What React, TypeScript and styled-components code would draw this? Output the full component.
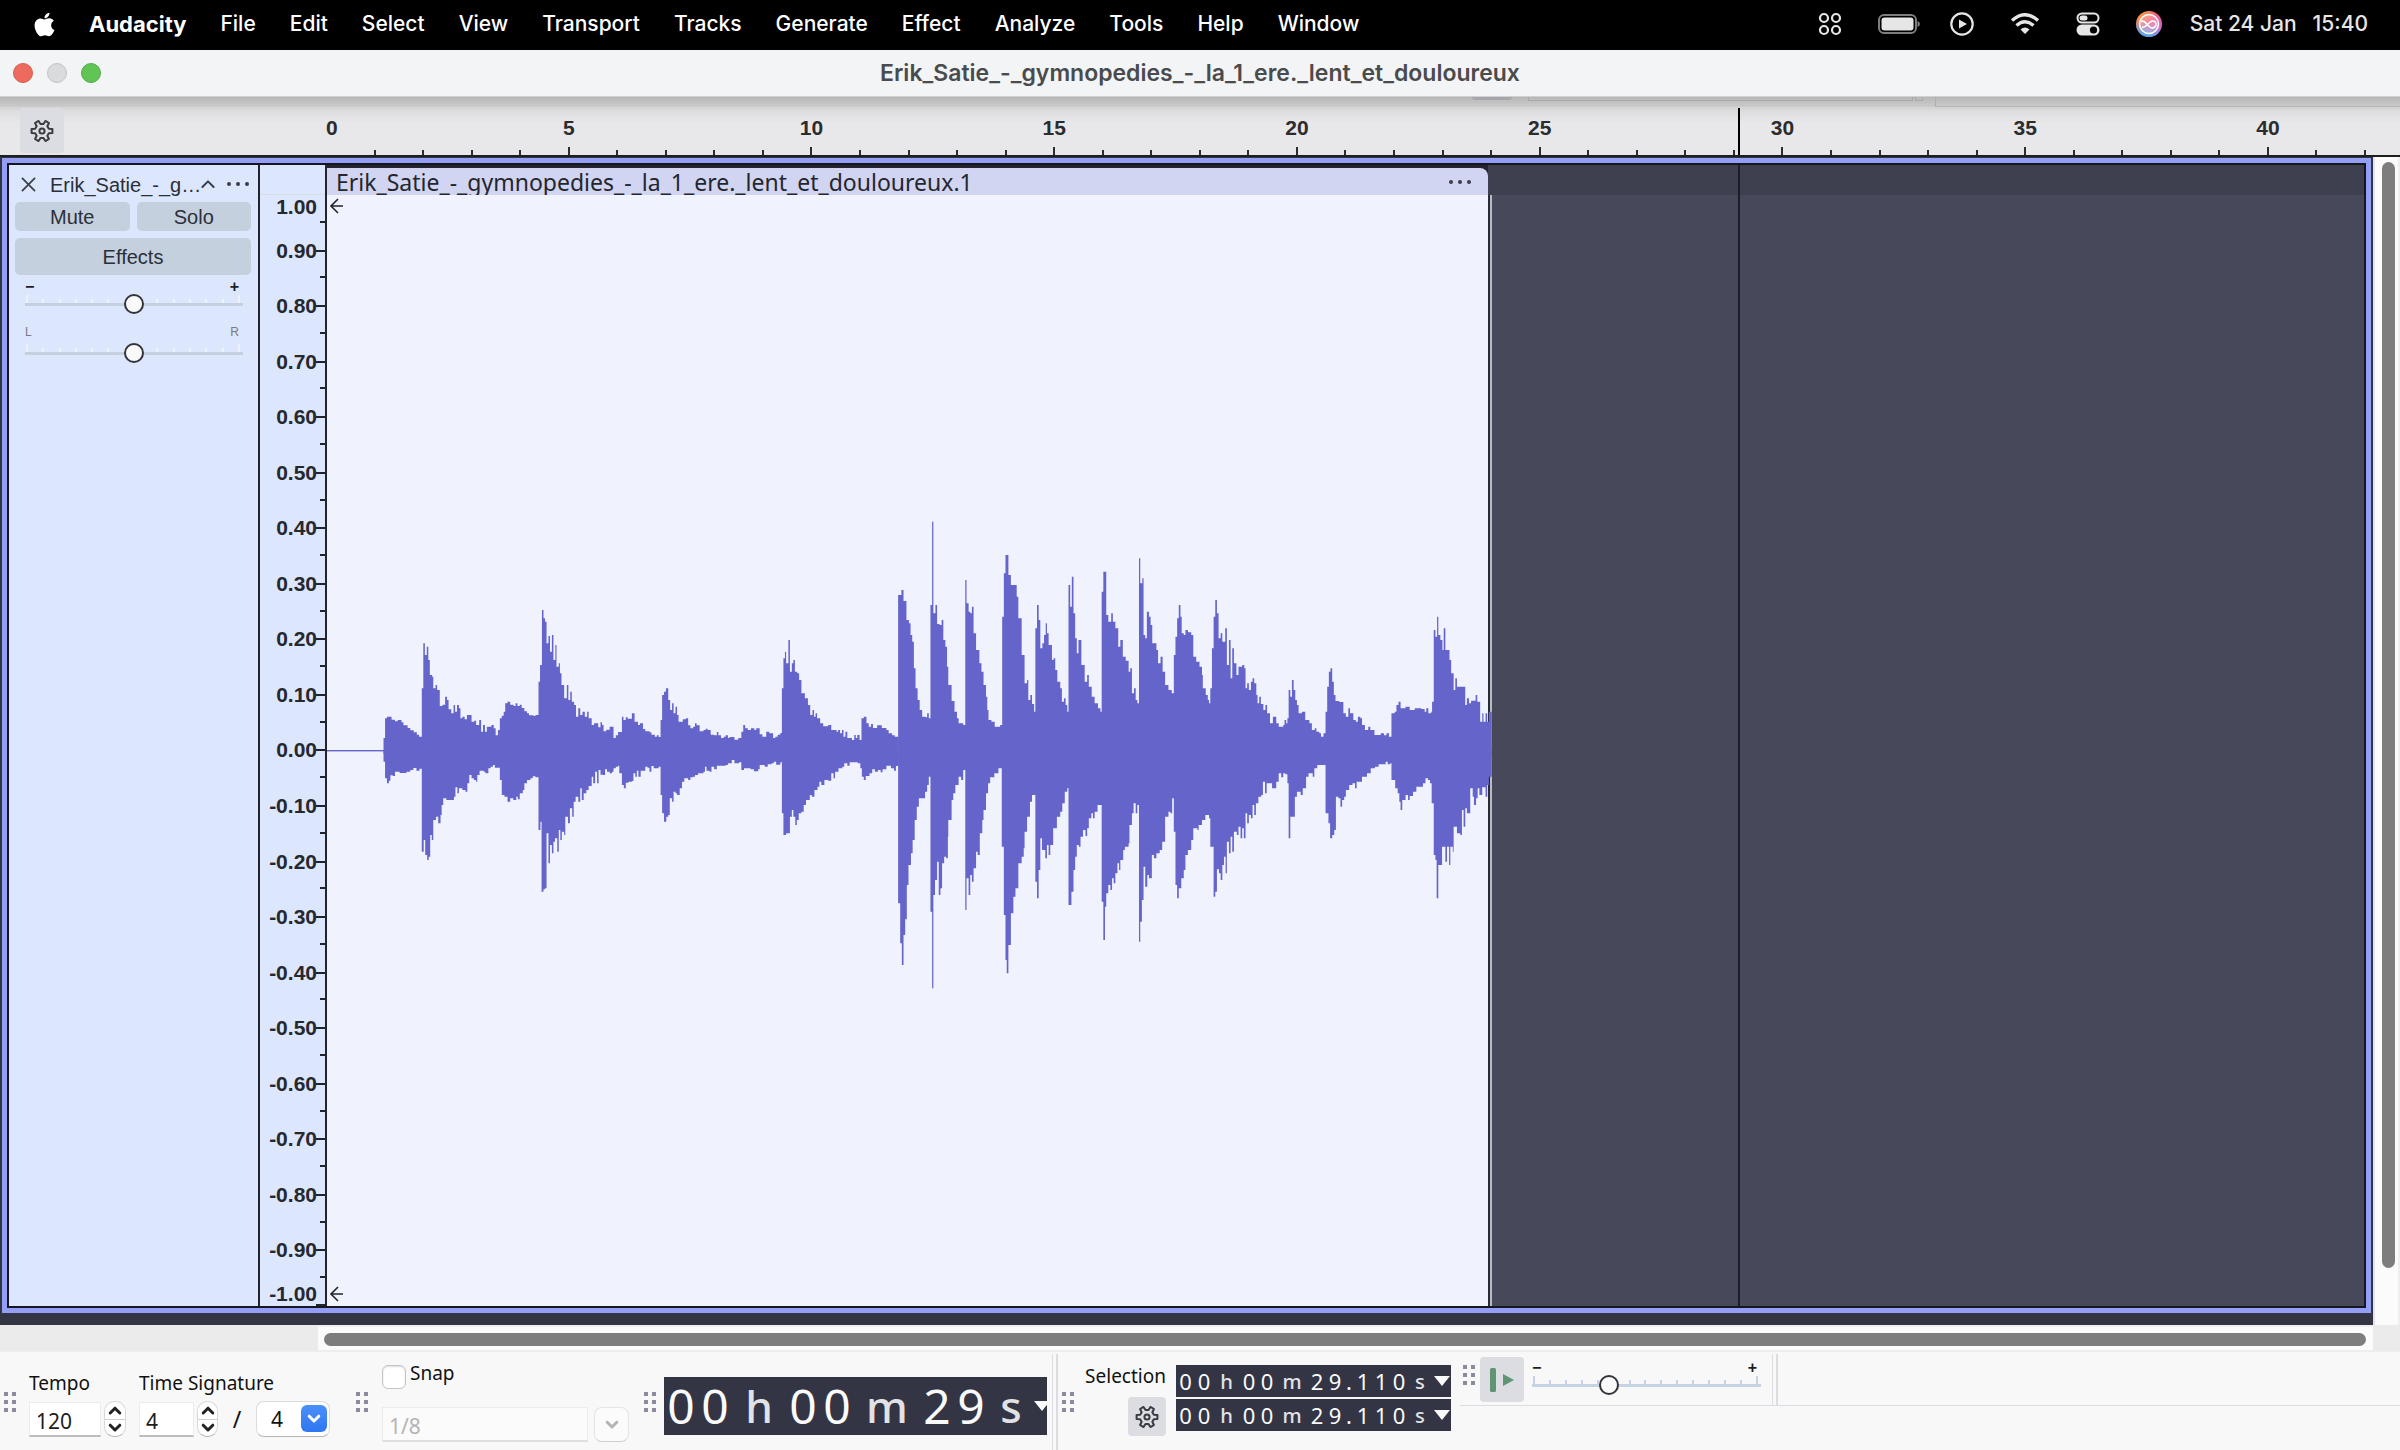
import React from "react";
import styled, { createGlobalStyle, css } from "styled-components";
import { FaApple } from "react-icons/fa6";

const HELV = `"Liberation Sans", Arial, sans-serif`;
const LUCIDA = `"Noto Sans", "Open Sans", sans-serif`;
const SYSTEM = `Inter, "Liberation Sans", sans-serif`;

const Global = createGlobalStyle`
  *, *::before, *::after { box-sizing: border-box; }
  body { margin: 0; background: #f8f8f8; font-family: ${HELV}; }
  button, input, select { font: inherit; color: inherit; margin: 0; }
`;

const plainButton = css`
  border: 0;
  padding: 0;
  background: none;
  display: flex;
  align-items: center;
  justify-content: center;
`;

const Window = styled.div`
  min-height: 100vh;
  display: flex;
  flex-direction: column;
`;

/* ---------- system menu bar ---------- */
const MenuBar = styled.header`
  height: 50px;
  flex: none;
  background: #000;
  color: #fff;
  display: flex;
  align-items: center;
  justify-content: space-between;
  padding: 0 32px 2px 34px;
  font: 500 21px/24px ${SYSTEM};
`;
const MenuGroup = styled.nav`
  display: flex;
  align-items: center;
  gap: 34px;
`;
const MenuItem = styled.button<{ $bold?: boolean }>`
  ${plainButton}
  font-weight: ${(p) => (p.$bold ? 700 : 500)};
  font-size: ${(p) => (p.$bold ? 22 : 21)}px;
  svg { width: 21px; }
`;
const StatusGroup = styled.div`
  display: flex;
  align-items: center;
  gap: 36px;
  color: #e6e6e6;
`;
const BatteryIcon = styled.svg`
  margin-right: -6px;
`;
const Clock = styled.time`
  display: flex;
  gap: 16px;
  margin-left: -8px;
`;

/* ---------- title bar ---------- */
const TitleBar = styled.div`
  height: 47px;
  flex: none;
  background: #f3f4f6;
  border-bottom: 1px solid #d0d1d2;
  display: grid;
  grid-template-columns: 1fr auto 1fr;
  align-items: center;
  padding: 0 13px;
`;
const Lights = styled.div`
  display: flex;
  gap: 14px;
`;
const Light = styled.button<{ $fill: string; $edge: string }>`
  width: 20px;
  height: 20px;
  padding: 0;
  border-radius: 50%;
  background: ${(p) => p.$fill};
  border: 1px solid ${(p) => p.$edge};
`;
const Title = styled.h1`
  margin: 0;
  font: 600 23px/26px ${SYSTEM};
  color: #4a4b4c;
`;

/* ---------- time ruler ---------- */
const RulerBar = styled.div`
  height: 60px;
  flex: none;
  display: flex;
  flex-direction: column;
  border-bottom: 2px solid #1b201f;
  background: linear-gradient(#b7b7b7 0, #cbcbcb 10px, #dcdcdd 13px, #e8e8ea 26px);
`;
const HiddenBar = styled.div`
  height: 11px;
  flex: none;
  display: flex;
  align-items: flex-start;
  border-bottom: 1px solid #d6d6d6;
`;
const HiddenLeft = styled.div`
  flex: 1475 0 0;
`;
const HiddenKnob = styled.div`
  width: 40px;
  height: 3px;
  background: #a6a7aa;
  border-radius: 0 0 8px 8px;
  margin-right: 16px;
`;
const HiddenBox = styled.div`
  flex: 383 0 0;
  height: 4px;
  border: 1px solid #a9a9a9;
  border-top: 0;
`;
const HiddenTab = styled.div`
  width: 8px;
  height: 4px;
  margin: 0 12px 0 2px;
  border: 1px solid #a9a9a9;
  border-top: 0;
`;
const HiddenRight = styled.div`
  flex: 465 0 0;
  height: 10px;
  border-left: 1px solid #adadad;
  border-bottom: 1px solid #b5b5b5;
`;
const RulerRow = styled.div`
  flex: 1;
  display: flex;
`;
const RulerGutter = styled.div`
  width: 326px;
  flex: none;
  padding-left: 20px;
`;
const SquareButton = styled.button<{ $w: number; $h: number }>`
  ${plainButton}
  width: ${(p) => p.$w}px;
  height: ${(p) => p.$h}px;
  border-radius: 4px;
  background: #dcdde3;
`;
const Seconds = styled.div`
  flex: 1;
  position: relative;
  display: grid;
  grid-template-columns: repeat(42, 1fr);
  grid-template-rows: 1fr 8px;
  margin-right: 35px;
`;
const SecondLabel = styled.span<{ $at: number }>`
  grid-row: 1;
  grid-column: ${(p) => (p.$at === 0 ? "1 / span 2" : `${p.$at - 1} / span 4`)};
  text-align: ${(p) => (p.$at === 0 ? "left" : "center")};
  font: bold 21px/38px ${HELV};
  padding-top: 1px;
  color: #2b2c2e;
`;
const SecondTick = styled.span<{ $major: boolean }>`
  grid-row: 2;
  margin-right: -1px;
  align-self: end;
  height: ${(p) => (p.$major ? 8 : 5)}px;
  border-right: 2px solid #2b2c2e;
`;
const Playhead = styled.div<{ $color: string }>`
  position: absolute;
  top: 0;
  bottom: 0;
  left: 69.25%;
  width: 2px;
  background: ${(p) => p.$color};
`;

/* ---------- track area ---------- */
const TrackArea = styled.main`
  flex: 1;
  display: flex;
`;
const TrackPad = styled.div`
  flex: 1;
  display: flex;
  background: #333545;
  padding: 1px 2px 12px;
`;
const TrackFrame = styled.section`
  flex: 1;
  display: flex;
  border: 5px solid #949ef5;
  background: #15161f;
  padding: 2px;
`;
const Panel = styled.div`
  width: 251px;
  flex: none;
  background: #dce6fc;
  border-right: 2px solid #22242c;
  padding: 6px 7px 0 6px;
  display: flex;
  flex-direction: column;
  color: #2b2f38;
  font-size: 20px;
  line-height: 24px;
`;
const PanelHead = styled.div`
  height: 31px;
  display: flex;
  align-items: center;
  padding: 0 2px 4px 6px;
`;
const IconButton = styled.button`
  ${plainButton}
`;
const TrackName = styled.span`
  flex: 1;
  padding-left: 14px;
  white-space: nowrap;
`;
const HeadTools = styled.div`
  display: flex;
  gap: 12px;
`;
const ButtonRow = styled.div`
  display: flex;
  gap: 7px;
  margin-bottom: 7px;
`;
const PanelButton = styled.button<{ $tall?: boolean }>`
  ${plainButton}
  flex: 1;
  height: ${(p) => (p.$tall ? 37 : 29)}px;
  border-radius: 5px;
  background: #c4d0de;
`;
const SliderBlock = styled.div`
  padding: 0 8px 0 10px;
`;
const SliderEnds = styled.div<{ $small?: boolean }>`
  display: flex;
  justify-content: space-between;
  padding: 0 4px 0 0;
  height: ${(p) => (p.$small ? 17 : 11)}px;
  font: ${(p) => (p.$small ? "12px/14px" : "bold 16px/10px")} ${HELV};
  color: ${(p) => (p.$small ? "#777a80" : "#1d1f26")};
`;
const SliderStack = styled.div`
  display: grid;
  height: 22px;
  margin-bottom: 10px;
`;
const Ticks = styled.div<{ $color: string }>`
  grid-area: 1 / 1;
  height: 11px;
  padding: 0 3px 0 1px;
  display: flex;
  align-items: flex-end;
  justify-content: space-between;
  span { width: 2px; height: 5px; background: ${(p) => p.$color}; }
  span:first-child, span:last-child { height: 9px; }
`;
const Range = styled.input<{ $line: string }>`
  grid-area: 1 / 1;
  appearance: none;
  width: 100%;
  height: 22px;
  background: linear-gradient(${(p) => p.$line}, ${(p) => p.$line}) center / 100% 3px no-repeat;
  &::-webkit-slider-thumb {
    appearance: none;
    width: 20px;
    height: 20px;
    border-radius: 50%;
    border: 2px solid #33353b;
    background: #fafafa;
  }
`;

const LevelRuler = styled.div`
  width: 67px;
  flex: none;
  background: #dce6fc;
  border-right: 2px solid #22242c;
  padding-top: 29px;
  display: flex;
  flex-direction: column;
`;
const tick = "linear-gradient(#22242c, #22242c)";
const Level = styled.div<{ $edge?: "top" | "bottom" }>`
  flex: ${(p) => (p.$edge ? 1 : 2)} 0 0;
  display: flex;
  align-items: ${(p) => (p.$edge === "top" ? "flex-start" : p.$edge === "bottom" ? "flex-end" : "center")};
  justify-content: flex-end;
  padding-right: 8px;
  font: bold 21px/24px ${HELV};
  color: #26282f;
  border-top: ${(p) => (p.$edge === "top" ? "1px solid #d9dce2" : "0")};
  background: ${(p) =>
    p.$edge === "top"
      ? `${tick} right bottom / 5px 2px no-repeat`
      : p.$edge === "bottom"
        ? `${tick} right bottom / 9px 2px no-repeat`
        : `${tick} right center / 9px 2px no-repeat, ${tick} right bottom / 5px 2px no-repeat`};
`;

const Lane = styled.div`
  flex: 1;
  position: relative;
  display: flex;
  background: linear-gradient(#3f404f 30px, #47485a 30px);
`;
const Clip = styled.article`
  width: 57%;
  display: flex;
  flex-direction: column;
  position: relative;
  background: #22232f;
`;
const ClipHead = styled.div`
  height: 27px;
  margin-top: 3px;
  flex: none;
  border-top-right-radius: 8px;
  background: #d1d5f1;
  display: flex;
  align-items: center;
  justify-content: space-between;
  padding: 0 17px 0 9px;
  font: 23px/26px ${LUCIDA};
  color: #24262e;
`;
const Wave = styled.div`
  flex: 1;
  position: relative;
  background: #f0f2fe;
  svg.wave { position: absolute; inset: 0; width: 100%; height: 100%; overflow: visible; }
`;
const EdgeArrow = styled.svg<{ $end?: boolean }>`
  position: absolute;
  left: 2px;
  ${(p) => (p.$end ? "bottom: 4px;" : "top: 3px;")}
`;
const ClipEdge = styled.div`
  width: 4px;
  margin-top: 30px;
  border-left: 2px solid #2a2b36;
  background: #b9bac4;
`;

const VScroll = styled.div`
  width: 27px;
  flex: none;
  background: #fbfbfb;
  border-left: 2px solid #e4e2e4;
  border-right: 2px solid #eeeeee;
  padding: 5px 3px 57px 7px;
  display: flex;
`;
const Thumb = styled.div`
  flex: 1;
  border-radius: 7px;
  background: #7d7d7d;
`;
const HScroll = styled.div`
  height: 26px;
  flex: none;
  background: #ebebeb;
  padding: 0 27px 0 318px;
  display: flex;
`;
const HTrack = styled.div`
  flex: 1;
  display: flex;
  background: #fbfbfb;
  border-top: 2px solid #eeeeee;
  border-bottom: 1px solid #eeeeee;
  padding: 6px 7px 4px 6px;
`;

/* ---------- bottom toolbars ---------- */
const Dock = styled.footer`
  height: 99px;
  flex: none;
  background: #f8f8f8;
  border-top: 1px solid #eeeeee;
  display: flex;
  align-items: stretch;
  font: 19px/24px ${LUCIDA};
  color: #111;
`;
const Toolbar = styled.div<{ $lead: number }>`
  display: flex;
  flex: none;
  padding-left: ${(p) => p.$lead}px;
`;
const GripBox = styled.div<{ $high?: boolean }>`
  flex: none;
  align-self: flex-start;
  margin-top: ${(p) => (p.$high ? 13 : 40)}px;
  display: grid;
  grid-template-columns: 4px 4px;
  gap: 4px;
  i { height: 4px; background: #8a8b9e; }
`;
const Field = styled.div<{ $w: number; $ml: number }>`
  width: ${(p) => p.$w}px;
  margin-left: ${(p) => p.$ml}px;
  padding-top: 19px;
  display: flex;
  flex-direction: column;
  white-space: nowrap;
`;
const Inline = styled.div`
  display: flex;
  align-items: center;
  gap: 3px;
  margin-top: 6px;
`;
const TextBox = styled.input<{ $w: number; $dim?: boolean }>`
  width: ${(p) => p.$w}px;
  height: 35px;
  padding: 4px 6px 0;
  border: 1px solid #ececec;
  border-bottom: 2px solid ${(p) => (p.$dim ? "#dedede" : "#bcbcbc")};
  background: ${(p) => (p.$dim ? "#fbfbfb" : "#fff")};
  color: ${(p) => (p.$dim ? "#b4b4b4" : "#1c1c1c")};
  font: 21px/24px ${LUCIDA};
`;
const Spinner = styled.div`
  width: 22px;
  height: 36px;
  border-radius: 10px;
  background: #fff;
  border: 1px solid #d9d9d9;
  border-bottom-color: #b5b5b5;
  display: flex;
  flex-direction: column;
`;
const SpinHalf = styled.button`
  ${plainButton}
  flex: 1;
  & + & { border-top: 1px solid #d0d0d0; }
`;
const Slash = styled.span`
  width: 33px;
  text-align: center;
  font-size: 23px;
`;
const SelectWrap = styled.div`
  position: relative;
  width: 77px;
  height: 36px;
`;
const Select = styled.select`
  appearance: none;
  width: 100%;
  height: 100%;
  border: 1px solid #dcdcdc;
  border-bottom-color: #b5b5b5;
  border-radius: 8px;
  background: #fff;
  padding: 0 0 0 14px;
  font: 21px/24px ${LUCIDA};
`;
const SelectMark = styled.span`
  position: absolute;
  right: 3px;
  top: 4px;
  width: 26px;
  height: 27px;
  border-radius: 6px;
  background: linear-gradient(#4a90fa, #2f76f1);
  display: flex;
  align-items: center;
  justify-content: center;
  pointer-events: none;
`;
const SnapField = styled.div`
  width: 262px;
  margin-left: 14px;
  display: flex;
  flex-direction: column;
`;
const SnapLabel = styled.label`
  display: flex;
  gap: 4px;
  height: 37px;
  margin: 9px 0;
  align-items: flex-start;
`;
const Tick = styled.input`
  appearance: none;
  width: 24px;
  height: 24px;
  && { margin-top: 4px; }
  border: 1px solid #c4c4c4;
  border-radius: 6px;
  background: #fff;
  box-shadow: inset 0 1px 2px #dddddd;
`;
const SnapRow = styled.div`
  display: flex;
  gap: 6px;
`;
const ComboButton = styled.button`
  ${plainButton}
  width: 35px;
  height: 35px;
  border: 1px solid #e4e4e4;
  border-bottom-color: #d0d0d0;
  border-radius: 8px;
  background: #fbfbfb;
`;
const Clockface = styled.div<{ $big?: boolean }>`
  display: flex;
  align-items: center;
  width: ${(p) => (p.$big ? 383 : 275)}px;
  height: ${(p) => (p.$big ? 58 : 32)}px;
  background: #333545;
  color: #fafafa;
  font: ${(p) => (p.$big ? "48px/58px" : "22px/32px")} ${LUCIDA};
`;
const Cell = styled.span<{ $w: number; $unit?: boolean }>`
  width: ${(p) => p.$w}px;
  flex: none;
  text-align: center;
  font-size: ${(p) => (p.$unit ? "0.92em" : "1em")};
  font-weight: ${(p) => (p.$unit ? 500 : 400)};
  color: ${(p) => (p.$unit ? "#e2e2e6" : "#fafafa")};
`;
const DropArrow = styled.button`
  ${plainButton}
  flex: 1;
`;
const BigClock = styled.div`
  margin: 25px 5px 0 8px;
`;
const Rule = styled.div`
  width: 6px;
  flex: none;
  margin-top: 2px;
  border-left: 1px solid #dcdce2;
  border-right: 2px solid #dcdce2;
`;
const SelectionHead = styled.div`
  width: 80px;
  margin: 12px 10px 0 12px;
  display: flex;
  flex-direction: column;
  align-items: flex-end;
  gap: 9px;
`;
const SelectionTimes = styled.div`
  display: flex;
  flex-direction: column;
  gap: 2px;
  padding-top: 13px;
`;
const PlayDock = styled.div`
  flex: 1;
  margin-left: 9px;
  padding-left: 3px;
  display: flex;
  height: 54px;
  border-bottom: 1px solid #dcdce2;
`;
const PlayButton = styled(SquareButton)`
  margin: 5px 8px 0 5px;
`;
const PlaySpeed = styled.div`
  width: 229px;
  margin-right: 11px;
  padding-top: 11px;
`;

/* ---------- drawings ---------- */
const gearPath = (() => {
  const pts: string[] = [];
  for (let i = 0; i < 6; i++) {
    const base = i * 60;
    [[-18, 7.2], [-11, 10.6], [11, 10.6], [18, 7.2]].forEach(([a, r]) => {
      const t = ((base + a) * Math.PI) / 180;
      pts.push(`${(12 + r * Math.cos(t)).toFixed(2)} ${(12 + r * Math.sin(t)).toFixed(2)}`);
    });
  }
  return `M${pts.join("L")}Z`;
})();

const Gear = () => (
  <svg width="24" height="24" viewBox="0 0 24 24" fill="none" stroke="#3a3b42" strokeWidth="2" strokeLinejoin="round">
    <path d={gearPath} />
    <circle cx="12" cy="12" r="2.6" />
  </svg>
);

const Chevron = ({ up, color = "#222", size = 12, weight = 3 }: { up?: boolean; color?: string; size?: number; weight?: number }) => (
  <svg width={size} height={size * 0.6} viewBox="0 0 20 12" fill="none" stroke={color} strokeWidth={(weight * 20) / size} strokeLinecap="round" strokeLinejoin="round" overflow="visible">
    <path d={up ? "M2 10L10 2L18 10" : "M2 2L10 10L18 2"} />
  </svg>
);

const Dots = () => (
  <svg width="22" height="6" viewBox="0 0 22 6" fill="#3a3d48">
    <circle cx="2" cy="3" r="2" />
    <circle cx="11" cy="3" r="2" />
    <circle cx="20" cy="3" r="2" />
  </svg>
);

const Grip = ({ high }: { high?: boolean }) => (
  <GripBox $high={high}>
    <i /><i /><i /><i /><i /><i />
  </GripBox>
);

/* Envelope steps: each pair is the column where a level starts and the level itself. */
const TOP_A = "166,714 170,655 175,650 187,659 196,664 203,660 213,667 218,676 229,684 236,691 245,697 253,704 259,710 266,565 270,430 274,465 279,440 283,480 287,525 293,530 296,565 302,555 306,570 313,618 320,614 327,590 332,600 336,628 343,640 349,615 353,635 358,615 363,625 367,655 372,650 378,658 384,645 396,665 403,662 408,675 416,660 421,695 426,675 431,695 436,680 448,675 454,685 459,706 465,690 470,655 475,647 480,635 484,610 490,605 497,614 506,618 511,610 516,618 522,614 527,624 534,634 541,640 546,646 558,648 563,645 571,545 575,495 580,330 584,355 588,365 592,430 597,408 601,455 606,405 610,480 615,435 618,500 624,490 627,520 631,555 638,595 645,555 649,600 654,575 658,605 664,615 669,650 675,625 680,645 686,635 692,650 698,635 702,655 710,675 716,670 727,682 733,667 737,675 741,694 748,689 757,680 767,714 773,706 779,696 789,650 793,660 799,652 804,656 815,640 822,665 831,675 836,670 844,687 850,694 861,697 866,704 875,710 880,706 885,711 890,660 894,585 899,575 904,565 910,600 915,630 920,610 924,640 929,620 933,645 937,665 948,658 956,655 962,676 968,685 975,680 980,670 984,676 992,694 1002,690 1008,686 1013,690 1021,704 1030,706 1037,696 1041,706 1048,714 1055,710 1060,706 1066,714 1070,711 1083,719 1093,714 1101,695 1106,675 1111,685 1118,690 1126,685 1135,690 1140,685 1149,703 1156,710 1166,695 1174,700 1184,714 1190,710 1196,704 1203,699 1207,565 1211,475 1215,455 1218,490 1224,420 1228,515 1233,490 1237,480 1241,515 1247,520 1252,540 1258,580 1267,595 1275,615 1281,645 1287,630 1291,650 1295,640 1299,655 1307,670 1315,679 1328,675 1336,690 1350,695 1354,690 1359,700 1364,690 1368,710 1373,695 1378,714 1390,720 1396,705 1400,714 1404,705 1410,720 1415,655 1421,650 1428,670 1434,680 1440,672 1445,684 1456,676 1468,684 1480,690 1486,700 1495,706 1502,710 1512,752";
const BOTTOM_A = "166,785 170,835 175,850 180,842 184,826 190,828 196,815 208,819 226,815 236,810 244,804 252,812 260,806 266,1055 271,1020 275,1065 280,1080 284,1070 288,1005 292,1020 296,960 303,950 309,970 315,945 318,915 322,895 330,900 346,900 350,890 354,862 359,880 363,865 372,870 380,875 385,850 390,825 396,835 402,840 408,845 411,825 417,812 428,815 432,820 440,805 446,800 452,795 457,803 470,840 475,885 482,890 490,905 497,895 505,900 513,890 517,898 522,880 530,870 534,850 541,840 550,835 556,829 563,832 571,990 576,965 579,1175 584,1168 588,1165 592,1000 597,1090 601,1035 606,1060 610,1025 614,1015 620,1055 624,990 628,1020 632,995 638,1005 641,950 648,970 653,925 659,950 663,905 668,890 675,905 680,865 684,900 689,880 696,870 702,858 710,830 714,850 719,815 724,850 728,810 733,824 740,825 745,808 750,815 757,820 763,815 767,805 773,800 779,797 782,820 789,855 794,865 799,848 806,845 815,843 819,820 824,830 828,812 832,830 838,812 850,800 856,803 861,815 866,798 872,805 885,800 890,885 894,940 899,965 905,950 910,945 914,895 920,905 924,875 929,880 933,885 940,865 946,845 952,835 962,840 968,832 975,830 980,825 988,820 1002,815 1006,800 1010,812 1018,815 1023,800 1030,808 1037,797 1060,795 1066,790 1076,780 1083,790 1095,787 1101,810 1108,805 1125,808 1134,814 1145,808 1149,795 1162,800 1170,793 1180,790 1186,785 1192,794 1203,787 1207,940 1211,1005 1218,1000 1228,950 1233,930 1237,950 1242,975 1246,960 1251,940 1258,935 1264,915 1270,900 1280,885 1285,890 1292,870 1300,860 1305,845 1310,855 1318,840 1328,842 1336,820 1342,835 1346,815 1355,805 1365,800 1370,790 1378,797 1384,787 1405,790 1412,805 1416,830 1421,840 1426,828 1436,820 1443,808 1450,815 1458,810 1465,817 1470,808 1480,797 1492,805 1500,812 1505,798 1512,752";
const TOP_B = "116,285 124,270 129,303 136,360 142,370 146,405 150,425 154,505 158,565 163,600 168,630 174,650 182,652 186,640 190,655 194,315 198,65 201,340 206,315 210,372 216,375 221,360 225,420 230,440 234,500 237,555 245,603 252,635 258,655 262,670 273,675 278,240 281,310 286,335 290,340 294,320 298,400 304,450 312,490 317,515 322,555 328,590 331,630 334,660 341,665 349,680 362,675 367,350 371,220 375,165 382,225 388,255 402,290 406,355 414,465 421,550 427,540 430,600 435,585 439,612 444,635 447,385 451,315 455,360 459,445 464,430 468,405 472,370 475,400 479,435 487,480 491,475 495,510 500,545 507,565 511,605 516,595 520,615 524,635 527,255 531,320 535,230 539,340 543,415 547,460 551,420 558,495 566,545 572,525 576,560 583,590 590,610 598,625 604,635 607,275 611,215 618,345 623,365 630,340 634,365 640,385 647,440 652,420 658,470 665,482 672,515 676,505 680,580 685,565 689,600 693,610 697,175 700,250 705,235 708,405 712,415 716,335 721,350 725,375 729,430 739,450 743,490 749,470 754,515 760,555 768,570 776,580 781,465 785,410 789,355 793,315 797,350 800,400 805,405 809,390 815,397 823,405 828,470 835,485 843,500 849,525 851,565 858,585 863,600 866,610 869,565 873,445 877,350 881,300 885,340 889,415 894,400 898,425 905,385 909,495 914,420 918,535 922,445 926,490 932,525 937,500 946,495 951,505 954,565 958,550 962,570 967,545 971,535 975,550 980,585 983,610 987,590 991,612 997,630 1002,615 1006,640 1013,670 1020,650 1028,670 1034,680 1045,675 1048,660 1052,670 1055,655 1058,570 1062,590 1066,540 1070,570 1074,600 1078,615 1082,640 1090,635 1098,660 1108,670 1114,690 1121,685 1125,695 1132,700 1136,710 1142,700 1147,635 1151,560 1155,515 1159,505 1163,545 1167,585 1171,603 1180,606 1190,640 1196,650 1202,625 1206,640 1214,660 1220,665 1225,650 1231,655 1235,675 1242,690 1250,680 1255,690 1265,705 1280,700 1288,706 1294,700 1300,710 1306,640 1314,635 1318,615 1323,605 1328,625 1340,620 1350,630 1362,625 1378,627 1386,635 1390,625 1395,640 1402,635 1404,605 1408,390 1412,410 1416,350 1419,405 1424,420 1429,450 1432,385 1436,450 1446,480 1450,520 1456,570 1460,535 1464,560 1480,560 1484,615 1488,595 1493,610 1498,602 1509,585 1513,605 1520,665 1525,640 1528,665 1533,640 1537,665 1541,635 1548,752";
const BOTTOM_B = "116,1210 121,1330 125,1395 129,1305 133,1258 137,1155 141,1095 147,1060 151,1020 156,960 161,920 166,895 181,875 186,855 190,830 194,1235 198,1465 201,1185 205,1140 210,1085 214,1185 218,1165 222,1090 227,1070 232,1075 236,1010 237,960 245,900 249,880 254,855 262,830 268,840 273,810 278,1230 281,1135 286,1185 290,1125 294,1145 298,1105 304,1055 308,1065 313,1000 319,960 322,930 328,880 333,850 338,832 348,820 358,805 366,1040 371,1245 375,1380 378,1420 382,1335 388,1240 394,1190 399,1165 406,1090 414,1070 419,1045 421,995 427,950 434,905 439,885 447,1145 451,1195 455,1110 459,1015 463,1050 471,1075 475,1035 479,1065 483,1035 490,985 499,950 507,935 512,910 518,875 524,865 527,1215 534,1175 539,1110 543,1070 547,1035 552,1040 556,1010 562,990 568,1008 572,985 576,955 582,940 586,955 590,935 597,915 607,1205 611,1320 615,1220 618,1180 623,1155 628,1170 632,1135 636,1150 640,1120 645,1090 649,1110 652,1080 659,1050 663,1040 672,1030 674,975 680,940 684,910 689,940 693,915 697,1325 700,1265 704,1200 708,1100 712,1160 717,1125 721,1135 728,1065 733,1075 739,1060 747,1050 753,1025 760,950 768,935 773,940 777,895 781,995 785,1155 789,1195 793,1165 799,1135 805,1110 809,1065 815,1050 823,1020 828,985 838,990 841,975 849,960 857,945 866,955 869,1040 877,1190 881,1175 885,1108 890,1120 894,1140 898,1095 902,1070 906,1120 909,1025 914,1060 918,1010 922,1055 926,995 933,1005 937,980 942,1015 946,985 950,1015 954,940 958,970 962,945 967,955 971,915 975,945 979,910 985,890 992,885 996,845 1001,880 1005,850 1012,850 1018,865 1028,845 1034,820 1040,832 1045,820 1050,823 1055,850 1058,1015 1062,950 1073,890 1078,875 1087,885 1092,865 1100,830 1106,820 1116,830 1120,805 1127,795 1142,795 1147,940 1154,970 1158,1015 1163,1005 1168,990 1172,890 1178,895 1183,920 1187,900 1192,890 1196,870 1204,855 1212,850 1218,865 1222,845 1235,830 1247,820 1256,805 1266,800 1275,793 1292,785 1297,793 1303,790 1306,840 1315,865 1321,880 1325,905 1328,930 1332,900 1340,885 1346,900 1350,888 1358,875 1366,860 1382,850 1388,835 1394,840 1399,850 1403,910 1408,1065 1412,1080 1415,1195 1419,1095 1428,1040 1436,1085 1440,1040 1445,1095 1448,1040 1454,1055 1456,980 1464,1000 1472,1005 1476,930 1480,980 1484,925 1488,940 1496,865 1502,890 1505,915 1510,895 1514,865 1518,885 1525,862 1533,890 1537,855 1541,830 1548,752";

/* The upper half closes a little below the centre line so that the halves overlap. */
const stepPath = (steps: string, base: number) => {
  const pairs = steps.split(" ").map((s) => s.split(","));
  return `M${pairs[0][0]} ${base}` + pairs.map(([x, y]) => `H${x}V${y}`).join("") + `V${base}Z`;
};

const Waveform = () => (
  <svg className="wave" viewBox="327 195 1161 1111" preserveAspectRatio="none" fill="#6464cb">
    <rect x="327" y="750" width="60" height="1.4" />
    <g transform="translate(320 500) scale(0.38265 0.33333)">
      <path d={stepPath(TOP_A, 762)} />
      <path d={stepPath(BOTTOM_A, 752)} />
    </g>
    <g transform="translate(850 500) scale(0.41454 0.33333)">
      <path d={stepPath(TOP_B, 762)} />
      <path d={stepPath(BOTTOM_B, 752)} />
    </g>
  </svg>
);

const BackArrow = ({ end }: { end?: boolean }) => (
  <EdgeArrow $end={end} width="16" height="16" viewBox="0 0 16 16" fill="none" stroke="#22242c" strokeWidth="1.6">
    <path d="M14 8H2M9 1L2 8L9 15" />
  </EdgeArrow>
);

const MENUS = ["File", "Edit", "Select", "View", "Transport", "Tracks", "Generate", "Effect", "Analyze", "Tools", "Help", "Window"];
const LEVELS = Array.from({ length: 21 }, (_, i) => ((10 - i) / 10).toFixed(2));

const SliderControl = ({ label, value, line, ticks, count }: { label: string; value: number; line: string; ticks: string; count: number }) => (
  <SliderStack>
    <Ticks $color={ticks}>
      {Array.from({ length: count }, (_, i) => (
        <span key={i} />
      ))}
    </Ticks>
    <Range type="range" aria-label={label} defaultValue={value} $line={line} />
  </SliderStack>
);

const NumberSpin = ({ id, value, width }: { id: string; value: string; width: number }) => (
  <>
    <TextBox id={id} $w={width} defaultValue={value} />
    <Spinner>
      <SpinHalf aria-label="Increase">
        <Chevron up />
      </SpinHalf>
      <SpinHalf aria-label="Decrease">
        <Chevron />
      </SpinHalf>
    </Spinner>
  </>
);

type CellSpec = [string, number, boolean?];
const BIG_CELLS: CellSpec[] = [["0", 34], ["0", 34], ["h", 54, true], ["0", 34], ["0", 34], ["m", 66, true], ["2", 34], ["9", 34], ["s", 46, true]];
const SMALL_CELLS: CellSpec[] = [["0", 19], ["0", 18], ["h", 27, true], ["0", 18], ["0", 18], ["m", 32, true], ["2", 18], ["9", 18], [".", 10], ["1", 18], ["1", 18], ["0", 18], ["s", 24, true]];

const TimeValue = ({ big, label }: { big?: boolean; label: string }) => (
  <Clockface $big={big} role="group" aria-label={label}>
    {(big ? BIG_CELLS : SMALL_CELLS).map(([ch, w, unit], i) => (
      <Cell key={i} $w={w} $unit={unit}>
        {ch}
      </Cell>
    ))}
    <DropArrow aria-label="Format">
      <svg width={big ? 13 : 16} height="10" viewBox={`0 0 ${big ? 13 : 16} 10`} fill="#fafafa">
        <path d="M0 0H16L8 10Z" />
      </svg>
    </DropArrow>
  </Clockface>
);

const StatusIcons = () => (
  <>
    <svg width="24" height="24" viewBox="0 0 24 24" fill="none" stroke="#e6e6e6" strokeWidth="2.2">
      <circle cx="6" cy="6" r="4" />
      <circle cx="18" cy="6" r="4" />
      <circle cx="6" cy="18" r="4" />
      <circle cx="18" cy="18" r="4" />
    </svg>
    <BatteryIcon width="42" height="20" viewBox="0 0 42 20">
      <rect x="1" y="1" width="37" height="18" rx="5" fill="none" stroke="#7d7d7d" strokeWidth="2" />
      <rect x="3.5" y="3.5" width="32" height="13" rx="3" fill="#e6e6e6" />
      <path d="M39.5 7Q42 8 42 10Q42 12 39.5 13Z" fill="#7d7d7d" />
    </BatteryIcon>
    <svg width="24" height="24" viewBox="0 0 24 24">
      <circle cx="12" cy="12" r="10.7" fill="none" stroke="#e6e6e6" strokeWidth="2.2" />
      <path d="M9 7.5L17 12L9 16.5Z" fill="#e6e6e6" />
    </svg>
    <svg width="30" height="22" viewBox="0 0 30 22" fill="none" stroke="#e6e6e6" strokeWidth="3.4">
      <path d="M2 7.5Q15 -4 28 7.5" />
      <path d="M6.5 12.5Q15 5 23.5 12.5" />
      <path d="M15 21L10.5 16.5Q15 12.5 19.5 16.5Z" fill="#e6e6e6" stroke="none" />
    </svg>
    <svg width="24" height="24" viewBox="0 0 24 24">
      <rect x="1.500" y="1.500" width="21" height="9" rx="4.500" fill="none" stroke="#e6e6e6" strokeWidth="2" />
      <rect x="3.500" y="3.500" width="8" height="5" rx="2.500" fill="#e6e6e6" />
      <rect x="0.500" y="12.500" width="23" height="11" rx="5.500" fill="#e6e6e6" />
      <circle cx="17.500" cy="18" r="3.600" fill="#000" />
    </svg>
    <svg width="26" height="26" viewBox="0 0 26 26">
      <defs>
        <linearGradient id="orbA" x1="0" y1="0" x2="1" y2="1">
          <stop offset="0" stopColor="#ffb02e" />
          <stop offset="0.45" stopColor="#f2607c" />
          <stop offset="1" stopColor="#c86bf5" />
        </linearGradient>
        <linearGradient id="orbB" x1="0.6" y1="0" x2="0.3" y2="1">
          <stop offset="0.45" stopColor="#46b4f5" stopOpacity="0" />
          <stop offset="1" stopColor="#3fb6f7" />
        </linearGradient>
      </defs>
      <circle cx="13" cy="13" r="13" fill="url(#orbA)" />
      <circle cx="13" cy="13" r="13" fill="url(#orbB)" />
      <circle cx="13" cy="13" r="9.5" fill="#ffffff" fillOpacity="0.25" stroke="#ffffff" strokeWidth="1.5" />
      <path d="M5 11C9 7 12 18 17 17C22 15 20 9 16 10C12 11 10 18 6 16" fill="none" stroke="#ffffff" strokeWidth="1.5" />
    </svg>
  </>
);

export default function App() {
  return (
    <Window>
      <Global />
      <MenuBar>
        <MenuGroup aria-label="Menus">
          <MenuItem aria-label="Apple">
            <FaApple size={27} />
          </MenuItem>
          <MenuItem $bold>Audacity</MenuItem>
          {MENUS.map((m) => (
            <MenuItem key={m}>{m}</MenuItem>
          ))}
        </MenuGroup>
        <StatusGroup>
          <StatusIcons />
          <Clock>
            <span>Sat 24 Jan</span>
            <span>15:40</span>
          </Clock>
        </StatusGroup>
      </MenuBar>

      <TitleBar>
        <Lights>
          <Light aria-label="Close" $fill="#ed6a5e" $edge="#d95a4e" />
          <Light aria-label="Minimise" $fill="#dadbdd" $edge="#c2c3c5" />
          <Light aria-label="Zoom" $fill="#61c454" $edge="#50ad45" />
        </Lights>
        <Title>Erik_Satie_-_gymnopedies_-_la_1_ere._lent_et_douloureux</Title>
      </TitleBar>

      <RulerBar>
        <HiddenBar>
          <HiddenLeft />
          <HiddenKnob />
          <HiddenBox />
          <HiddenTab />
          <HiddenRight />
        </HiddenBar>
        <RulerRow>
          <RulerGutter>
            <SquareButton $w={44} $h={45} aria-label="Timeline options">
              <Gear />
            </SquareButton>
          </RulerGutter>
          <Seconds>
            {[0, 5, 10, 15, 20, 25, 30, 35, 40].map((s) => (
              <SecondLabel key={s} $at={s}>
                {s}
              </SecondLabel>
            ))}
            {Array.from({ length: 42 }, (_, i) => (
              <SecondTick key={i} $major={(i + 1) % 5 === 0} />
            ))}
            <Playhead $color="#000" />
          </Seconds>
        </RulerRow>
      </RulerBar>

      <TrackArea>
        <TrackPad>
          <TrackFrame>
            <Panel>
              <PanelHead>
                <IconButton aria-label="Close track">
                  <svg width="15" height="15" viewBox="0 0 16 16" stroke="#3a3d48" strokeWidth="1.8">
                    <path d="M1 1L15 15M15 1L1 15" />
                  </svg>
                </IconButton>
                <TrackName>Erik_Satie_-_g…</TrackName>
                <HeadTools>
                  <IconButton aria-label="Collapse">
                    <Chevron up size={14} weight={2} color="#3a3d48" />
                  </IconButton>
                  <IconButton aria-label="Track menu">
                    <Dots />
                  </IconButton>
                </HeadTools>
              </PanelHead>
              <ButtonRow>
                <PanelButton>Mute</PanelButton>
                <PanelButton>Solo</PanelButton>
              </ButtonRow>
              <ButtonRow>
                <PanelButton $tall>Effects</PanelButton>
              </ButtonRow>
              <SliderBlock>
                <SliderEnds>
                  <span>−</span>
                  <span>+</span>
                </SliderEnds>
                <SliderControl label="Volume" value={50} line="#c4d0de" ticks="#eef3fb" count={14} />
                <SliderEnds $small>
                  <span>L</span>
                  <span>R</span>
                </SliderEnds>
                <SliderControl label="Pan" value={50} line="#c4d0de" ticks="#eef3fb" count={14} />
              </SliderBlock>
            </Panel>
            <LevelRuler>
              {LEVELS.map((l, i) => (
                <Level key={l} $edge={i === 0 ? "top" : i === 20 ? "bottom" : undefined}>
                  {l}
                </Level>
              ))}
            </LevelRuler>
            <Lane>
              <Clip>
                <ClipHead>
                  <span>Erik_Satie_-_gymnopedies_-_la_1_ere._lent_et_douloureux.1</span>
                  <IconButton aria-label="Clip menu">
                    <Dots />
                  </IconButton>
                </ClipHead>
                <Wave>
                  <Waveform />
                  <BackArrow />
                  <BackArrow end />
                </Wave>
              </Clip>
              <ClipEdge />
              <Playhead $color="#1b1d27" />
            </Lane>
          </TrackFrame>
        </TrackPad>
        <VScroll>
          <Thumb />
        </VScroll>
      </TrackArea>
      <HScroll>
        <HTrack>
          <Thumb />
        </HTrack>
      </HScroll>

      <Dock>
        <Toolbar $lead={4}>
          <Grip />
          <Field $w={98} $ml={13}>
            <label htmlFor="tempo">Tempo</label>
            <Inline>
              <NumberSpin id="tempo" value="120" width={72} />
            </Inline>
          </Field>
          <Field $w={191} $ml={12}>
            <label htmlFor="upper">Time Signature</label>
            <Inline>
              <NumberSpin id="upper" value="4" width={55} />
              <Slash>/</Slash>
              <SelectWrap>
                <Select aria-label="Beat unit" defaultValue="4">
                  <option>4</option>
                </Select>
                <SelectMark>
                  <Chevron color="#fff" />
                </SelectMark>
              </SelectWrap>
            </Inline>
          </Field>
        </Toolbar>
        <Toolbar $lead={26}>
          <Grip />
          <SnapField>
            <SnapLabel>
              <Tick type="checkbox" />
              Snap
            </SnapLabel>
            <SnapRow>
              <TextBox $w={206} $dim disabled aria-label="Snap to" defaultValue="1/8" />
              <ComboButton disabled aria-label="Snap options">
                <Chevron color="#b4b4b4" />
              </ComboButton>
            </SnapRow>
          </SnapField>
        </Toolbar>
        <Toolbar $lead={0}>
          <Grip />
          <BigClock>
            <TimeValue big label="Audio position" />
          </BigClock>
          <Rule />
        </Toolbar>
        <Toolbar $lead={4}>
          <Grip />
          <SelectionHead>
            <span>Selection</span>
            <SquareButton $w={38} $h={39} aria-label="Selection options">
              <Gear />
            </SquareButton>
          </SelectionHead>
          <SelectionTimes>
            <TimeValue label="Selection start" />
            <TimeValue label="Selection end" />
          </SelectionTimes>
        </Toolbar>
        <PlayDock>
          <Grip high />
          <PlayButton $w={44} $h={45} aria-label="Play at speed">
            <svg width="24" height="24" viewBox="0 0 24 24" fill="#5f9575">
              <rect x="0" y="0" width="6" height="24" rx="1.5" />
              <path d="M13 6L24 12L13 18Z" />
            </svg>
          </PlayButton>
          <PlaySpeed>
            <SliderEnds>
              <span>−</span>
              <span>+</span>
            </SliderEnds>
            <SliderControl label="Playback speed" value={32} line="#c5d3e3" ticks="#c5d3e3" count={15} />
          </PlaySpeed>
          <Rule />
        </PlayDock>
      </Dock>
    </Window>
  );
}
